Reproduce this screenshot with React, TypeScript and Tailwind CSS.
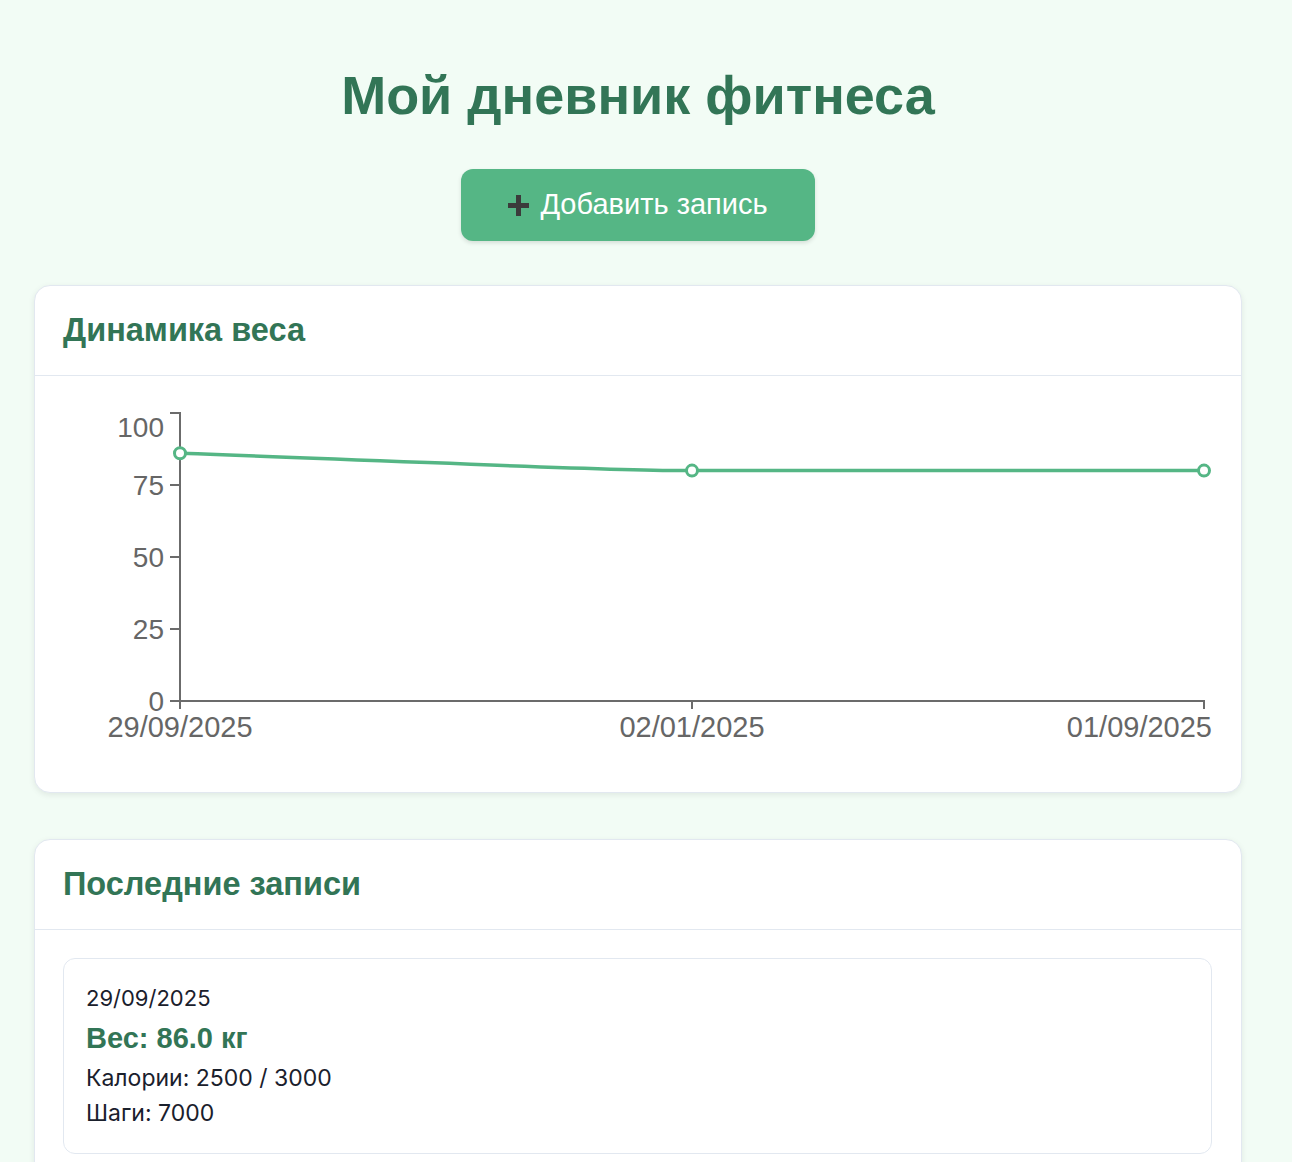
import React from "react";

const GREEN = "#327556";
const LINE = "#55b685";

function Chart() {
  const yTicks = [
    { v: "100", y: 37, ly: 51 },
    { v: "75", y: 109, ly: 109 },
    { v: "50", y: 181, ly: 181 },
    { v: "25", y: 253, ly: 253 },
    { v: "0", y: 325, ly: 325 },
  ];
  const pts = [
    { x: 145, y: 77.3 },
    { x: 657, y: 94.6 },
    { x: 1169, y: 94.6 },
  ];
  return (
    <svg width="1206" height="416" viewBox="0 0 1206 416" className="block">
      <g fontFamily="'Liberation Sans', Arial, sans-serif" fill="#666">
        {yTicks.map((t) => (
          <text key={t.v} x={129} y={t.ly} fontSize="28" textAnchor="end" dominantBaseline="central">
            {t.v}
          </text>
        ))}
        <g fontSize="29">
          <text x={145} y={351} textAnchor="middle" dominantBaseline="central">29/09/2025</text>
          <text x={657} y={351} textAnchor="middle" dominantBaseline="central">02/01/2025</text>
          <text x={1177} y={351} textAnchor="end" dominantBaseline="central">01/09/2025</text>
        </g>
      </g>
      <g stroke="#6b6b6b" strokeWidth="2" fill="none">
        <path d="M135,37 H145 V325 H135" />
        {yTicks.slice(1, 4).map((t) => (
          <path key={t.v} d={`M135,${t.y} H145`} />
        ))}
        <path d="M145,333 V325 H1169 V333" />
        <path d="M657,325 V333" />
      </g>
      <path
        d={`M${pts[0].x},${pts[0].y} C400,86 560,94.6 ${pts[1].x},${pts[1].y} L${pts[2].x},${pts[2].y}`}
        stroke={LINE}
        strokeWidth="3.5"
        fill="none"
      />
      {pts.map((p, i) => (
        <circle key={i} cx={p.x} cy={p.y} r="5.5" fill="#fff" stroke={LINE} strokeWidth="3" />
      ))}
    </svg>
  );
}

function Card({ title, children }: { title: string; children: React.ReactNode }) {
  return (
    <div className="bg-white border border-[#e2e8f0] rounded-[16px] shadow-[0_2px_6px_rgba(0,0,0,0.08)] overflow-hidden">
      <div className="h-[90px] flex items-center px-[28px] border-b border-[#e2e8f0]">
        <h2
          className="text-[32.5px] font-bold"
          style={{ color: GREEN, fontFamily: "'Liberation Sans', Arial, sans-serif" }}
        >
          {title}
        </h2>
      </div>
      {children}
    </div>
  );
}

export default function App() {
  return (
    <div className="min-h-[1162px] bg-[#f2fcf5]">
      <div className="w-[1276px] px-[34px] pb-10">
        <h1
          className="text-center text-[54px] font-bold leading-none pt-[68px] text-[#327556]"
          style={{ fontFamily: "'Liberation Sans', Arial, sans-serif" }}
        >
          Мой дневник фитнеса
        </h1>
        <div className="flex justify-center mt-[47px]">
          <button
            className="w-[354px] h-[72px] rounded-[12px] bg-[#55b685] text-white text-[29px] flex items-center justify-center gap-[11px] shadow-[0_2px_4px_rgba(0,0,0,0.12)]"
            style={{ fontFamily: "'Liberation Sans', Arial, sans-serif" }}
          >
            <svg width="21" height="21" viewBox="0 0 21 21">
              <rect x="8" y="0" width="5" height="21" fill="#3b3b3b" />
              <rect x="0" y="8" width="21" height="5" fill="#3b3b3b" />
            </svg>
            <span>Добавить запись</span>
          </button>
        </div>

        <div className="mt-[44px]">
          <Card title="Динамика веса">
            <Chart />
          </Card>
        </div>

        <div className="mt-[46px]">
          <Card title="Последние записи">
            <div className="p-[28px] pr-[29px]">
              <div
                className="border border-[#e2e8f0] rounded-[12px] pt-[24px] pb-[25px] px-[22px] text-[#1a202c]"
                style={{ fontFamily: "Inter, 'Liberation Sans', sans-serif" }}
              >
                <div className="text-[22px] leading-[30px]">29/09/2025</div>
                <div
                  className="mt-[10px] text-[29px] leading-[30px] font-bold"
                  style={{ color: GREEN, fontFamily: "'Liberation Sans', Arial, sans-serif" }}
                >
                  Вес: 86.0 кг
                </div>
                <div className="mt-[10px] text-[23px] leading-[30px]">Калории: 2500 / 3000</div>
                <div className="mt-[5px] text-[23px] leading-[30px]">Шаги: 7000</div>
              </div>
            </div>
          </Card>
        </div>
      </div>
    </div>
  );
}
